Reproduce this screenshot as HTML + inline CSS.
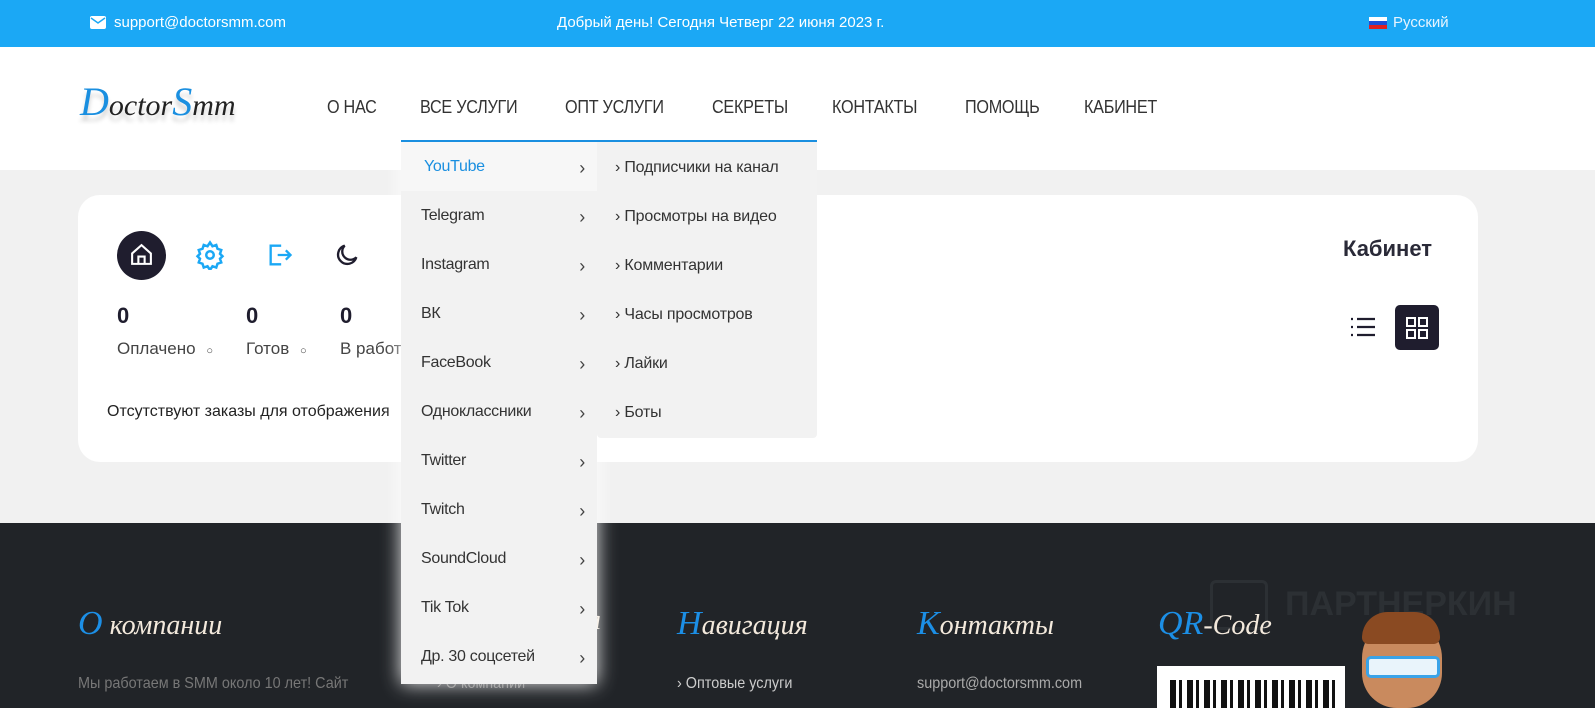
<!DOCTYPE html>
<html><head><meta charset="utf-8"><style>
*{margin:0;padding:0;box-sizing:border-box}
body{width:1595px;height:708px;overflow:hidden;position:relative;font-family:"Liberation Sans",sans-serif;background:#f1f1f1}
.a{position:absolute;white-space:nowrap}
.top{left:0;top:0;width:1595px;height:47px;background:#1ba8f5;color:#fff;font-size:15px}
.hdr{left:0;top:47px;width:1595px;height:123px;background:#fff}
.nav{font-size:18px;color:#333;top:97px;letter-spacing:-0.3px;transform:scaleX(.9);transform-origin:left}
.card{left:78px;top:195px;width:1400px;height:267px;background:#fff;border-radius:22px}
.foot{left:0;top:523px;width:1595px;height:185px;background:#212428}
.fh{font-family:"Liberation Serif",serif;font-style:italic;font-size:28px;color:#f3e9dc;top:605px}
.fh b{color:#1c8fe6;font-weight:normal;font-size:34px}
.ft{color:#777;font-size:16px;top:675px;transform:scaleX(.9);transform-origin:left}
.dd{left:401px;top:140px;width:196px;height:544px;background:#f2f2f2;border-top:2px solid #1a8fe0;box-shadow:0 0 18px rgba(255,255,255,.9)}
.dd div{height:49px;line-height:49px;padding-left:20px;font-size:16px;color:#333;position:relative;letter-spacing:-0.3px}
.dd div:after{content:"›";position:absolute;right:12px;top:2px;font-size:18px;color:#444}
.sub{left:597px;top:140px;width:220px;height:298px;background:#f2f2f2;border-top:2px solid #1a8fe0;border-radius:0 0 4px 4px}
.sub div{height:49px;line-height:52px;padding-left:18px;font-size:16px;color:#333;letter-spacing:-0.2px}
</style></head><body>
<div class="a top"></div>
<svg class="a" style="left:90px;top:16px" width="16" height="13" viewBox="0 0 16 13"><rect width="16" height="13" rx="2" fill="#fff"/><path d="M1 2l7 5 7-5" stroke="#1ba8f5" stroke-width="1.5" fill="none"/></svg>
<div class="a" style="left:114px;top:14px;color:#fff;font-size:15px">support@doctorsmm.com</div>
<div class="a" style="left:557px;top:14px;color:#fff;font-size:15px">Добрый день! Сегодня Четверг 22 июня 2023 г.</div>
<div class="a" style="left:1369px;top:17px;width:18px;height:12px;background:linear-gradient(#fff 33%,#1e4fd8 33% 66%,#e02020 66%)"></div>
<div class="a" style="left:1393px;top:14px;color:#e6f4ff;font-size:15px">Русский</div>
<div class="a hdr"></div>
<div class="a" style="left:80px;top:78px;font-family:'Liberation Serif',serif;font-style:italic;font-size:40px;color:#1a8fe0;text-shadow:0 6px 4px rgba(0,0,0,.18)">D<span style="color:#222;font-size:30px">octor</span>S<span style="color:#222;font-size:30px">mm</span></div>
<div class="a nav" style="left:327px">О НАС</div>
<div class="a nav" style="left:420px">ВСЕ УСЛУГИ</div>
<div class="a nav" style="left:565px">ОПТ УСЛУГИ</div>
<div class="a nav" style="left:712px">СЕКРЕТЫ</div>
<div class="a nav" style="left:832px">КОНТАКТЫ</div>
<div class="a nav" style="left:965px">ПОМОЩЬ</div>
<div class="a nav" style="left:1084px">КАБИНЕТ</div>
<div class="a card"></div>
<div class="a" style="left:117px;top:231px;width:49px;height:49px;border-radius:50%;background:#1f1d2e"></div>
<svg class="a" style="left:129px;top:242px" width="25" height="25" viewBox="0 0 24 24" fill="none" stroke="#fff" stroke-width="2"><path d="M3 11L12 3l9 8v10H3z"/><path d="M9 21v-7h6v7"/></svg>
<svg class="a" style="left:195px;top:240px" width="30" height="30" viewBox="0 0 24 24" fill="none" stroke="#1ba8f5" stroke-width="2"><circle cx="12" cy="12" r="3"/><path d="M12 2l2 3 3-1 1 3 3 1-1 3 2 2-2 2 1 3-3 1-1 3-3-1-2 3-2-3-3 1-1-3-3-1 1-3-2-2 2-2-1-3 3-1 1-3 3 1z"/></svg>
<svg class="a" style="left:266px;top:241px" width="28" height="28" viewBox="0 0 24 24" fill="none" stroke="#1ba8f5" stroke-width="2"><path d="M13 4H4v16h9M10 12h11M17 8l4 4-4 4"/></svg>
<svg class="a" style="left:333px;top:241px" width="28" height="28" viewBox="0 0 24 24" fill="none" stroke="#1f1d2e" stroke-width="2"><path d="M20 14A8 8 0 1110 4a6 6 0 0010 10z"/></svg>
<div class="a" style="left:117px;top:303px;font-size:22px;font-weight:bold;color:#1f1d2e">0</div>
<div class="a" style="left:246px;top:303px;font-size:22px;font-weight:bold;color:#1f1d2e">0</div>
<div class="a" style="left:340px;top:303px;font-size:22px;font-weight:bold;color:#1f1d2e">0</div>
<div class="a" style="left:117px;top:339px;font-size:17px;color:#444">Оплачено <span style="font-size:11px;margin-left:6px">○</span></div>
<div class="a" style="left:246px;top:339px;font-size:17px;color:#444">Готов <span style="font-size:11px;margin-left:6px">○</span></div>
<div class="a" style="left:340px;top:339px;font-size:17px;color:#444">В работе</div>
<div class="a" style="left:107px;top:403px;font-size:16px;color:#222">Отсутствуют заказы для отображения</div>
<div class="a" style="left:1343px;top:236px;font-size:22px;font-weight:bold;color:#2a2a38">Кабинет</div>
<svg class="a" style="left:1350px;top:316px" width="26" height="22" viewBox="0 0 26 22" stroke="#1f1d2e" stroke-width="2.2"><path d="M7 3h18M7 11h18M7 19h18M1 3h2M1 11h2M1 19h2"/></svg>
<div class="a" style="left:1395px;top:305px;width:44px;height:45px;border-radius:5px;background:#1f1d2e"></div>
<svg class="a" style="left:1406px;top:317px" width="22" height="22" viewBox="0 0 22 22" fill="none" stroke="#fff" stroke-width="2"><rect x="1" y="1" width="8" height="8"/><rect x="13" y="1" width="8" height="8"/><rect x="1" y="13" width="8" height="8"/><rect x="13" y="13" width="8" height="8"/></svg>
<div class="a foot"></div>
<div class="a" style="left:1210px;top:580px;width:58px;height:50px;border:3px solid #2c3034;border-radius:6px"></div>
<div class="a" style="left:1285px;top:585px;font-size:34px;color:#2c3034;font-weight:bold">ПАРТНЕРКИН</div>
<div class="a fh" style="left:78px"><b>О</b> компании</div>
<div class="a fh" style="left:560px">ция</div>
<div class="a fh" style="left:677px"><b>Н</b>авигация</div>
<div class="a fh" style="left:917px"><b>К</b>онтакты</div>
<div class="a fh" style="left:1158px"><b>QR</b>-Code</div>
<div class="a ft" style="left:78px">Мы работаем в SMM около 10 лет! Сайт</div>
<div class="a ft" style="left:437px">› О компании</div>
<div class="a ft" style="left:677px;color:#ccc">› Оптовые услуги</div>
<div class="a ft" style="left:917px;color:#aaa">support@doctorsmm.com</div>
<div class="a" style="left:1157px;top:666px;width:188px;height:42px;background:#fff"></div>
<div class="a" style="left:1170px;top:680px;width:165px;height:28px;background:repeating-linear-gradient(90deg,#111 0 6px,#fff 6px 9px,#111 9px 12px,#fff 12px 17px)"></div>
<div class="a" style="left:1362px;top:618px;width:80px;height:90px;border-radius:40px 40px 35px 35px;background:#c98a5e"></div>
<div class="a" style="left:1362px;top:612px;width:78px;height:32px;border-radius:40px 40px 10px 10px;background:#8a4a22"></div>
<div class="a" style="left:1366px;top:656px;width:74px;height:22px;border:3px solid #3aa3e8;border-radius:5px;background:#e9f4fb"></div>
<div class="a dd">
<div style="color:#1a8fe0;background:#f7f7f7;padding-left:23px">YouTube</div>
<div>Telegram</div><div>Instagram</div><div>ВК</div><div>FaceBook</div><div>Одноклассники</div><div>Twitter</div><div>Twitch</div><div>SoundCloud</div><div>Tik Tok</div><div>Др. 30 соцсетей</div>
</div>
<div class="a sub">
<div>› Подписчики на канал</div><div>› Просмотры на видео</div><div>› Комментарии</div><div>› Часы просмотров</div><div>› Лайки</div><div>› Боты</div>
</div>
</body></html>
